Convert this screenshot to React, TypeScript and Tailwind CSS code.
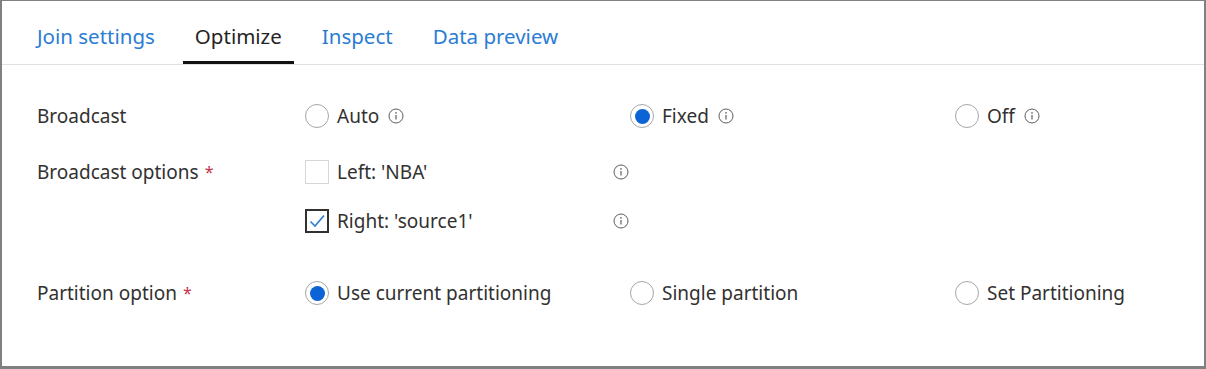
import React from "react";

const font = { fontFamily: '"Noto Sans", "Open Sans", Arial, sans-serif' };

const InfoIcon = () => (
  <svg width="16" height="16" viewBox="0 0 16 16" className="shrink-0">
    <circle cx="8" cy="8" r="7" fill="none" stroke="#605e5c" strokeWidth="1" />
    <line x1="8" y1="7" x2="8" y2="11.5" stroke="#605e5c" strokeWidth="1.2" />
    <circle cx="8" cy="4.9" r="0.8" fill="#605e5c" />
  </svg>
);

const Radio = ({ checked }: { checked?: boolean }) => (
  <span className="w-[24px] h-[24px] rounded-full border border-[#a6a6a6] flex items-center justify-center shrink-0 bg-white">
    {checked && <span className="w-[15px] h-[15px] rounded-full bg-[#0b63d6]" />}
  </span>
);

const Checkbox = ({ checked }: { checked?: boolean }) =>
  checked ? (
    <span className="w-[24px] h-[24px] border-2 border-[#323130] flex items-center justify-center shrink-0 bg-white">
      <svg width="18" height="18" viewBox="0 0 18 18">
        <path d="M2.5 9.5 L7 14 L16 3.5" fill="none" stroke="#2b7cd3" strokeWidth="1.6" />
      </svg>
    </span>
  ) : (
    <span className="w-[24px] h-[24px] border border-[#d6d6d6] shrink-0 bg-white" />
  );

const RadioOption = ({ label, checked, info }: { label: string; checked?: boolean; info?: boolean }) => (
  <div className="flex items-center w-[325px] shrink-0">
    <Radio checked={checked} />
    <span className="ml-[8px] text-[19px] text-[#323130]">{label}</span>
    {info && (
      <span className="ml-[9px] flex">
        <InfoIcon />
      </span>
    )}
  </div>
);

const Label = ({ text, required }: { text: string; required?: boolean }) => (
  <div className="w-[268px] text-[19px] text-[#323130] shrink-0 flex items-center">
    {text}
    {required && <span className="ml-[6px] text-[16px] text-[#c4314b]">*</span>}
  </div>
);

export default function App() {
  const tabs = ["Join settings", "Optimize", "Inspect", "Data preview"];
  return (
    <div
      style={font}
      className="w-[1206px] h-[369px] bg-white border-t border-x-2 border-b-[3px] border-[#808080] flex flex-col overflow-hidden"
    >
      {/* Tabs */}
      <div className="h-[64px] flex items-end gap-[16px] pl-[23px] border-b border-[#e1e1e1] shrink-0">
        {tabs.map((t) => (
          <div
            key={t}
            className={
              t === "Optimize"
                ? "h-full flex items-center px-[12px] border-b-[3px] border-[#111] text-[20.5px] text-[#252423] pt-[11px]"
                : "h-full flex items-center px-[12px] border-b-[3px] border-transparent text-[20.5px] text-[#2b7cd3] pt-[11px]"
            }
          >
            {t}
          </div>
        ))}
      </div>

      {/* Settings */}
      <div className="pl-[35px] pt-[31px] flex flex-col">
        <div className="h-[40px] flex items-center">
          <Label text="Broadcast" />
          <RadioOption label="Auto" info />
          <RadioOption label="Fixed" checked info />
          <RadioOption label="Off" info />
        </div>

        <div className="h-[40px] mt-[16px] flex items-center">
          <Label text="Broadcast options" required />
          <div className="flex items-center w-[308px] shrink-0">
            <Checkbox />
            <span className="ml-[8px] text-[19px] text-[#323130]">Left: 'NBA'</span>
          </div>
          <InfoIcon />
        </div>

        <div className="h-[40px] mt-[9px] flex items-center">
          <div className="w-[268px] shrink-0" />
          <div className="flex items-center w-[308px] shrink-0">
            <Checkbox checked />
            <span className="ml-[8px] text-[19px] text-[#323130]">Right: 'source1'</span>
          </div>
          <InfoIcon />
        </div>

        <div className="h-[40px] mt-[32px] flex items-center">
          <Label text="Partition option" required />
          <RadioOption label="Use current partitioning" checked />
          <RadioOption label="Single partition" />
          <RadioOption label="Set Partitioning" />
        </div>
      </div>
    </div>
  );
}
